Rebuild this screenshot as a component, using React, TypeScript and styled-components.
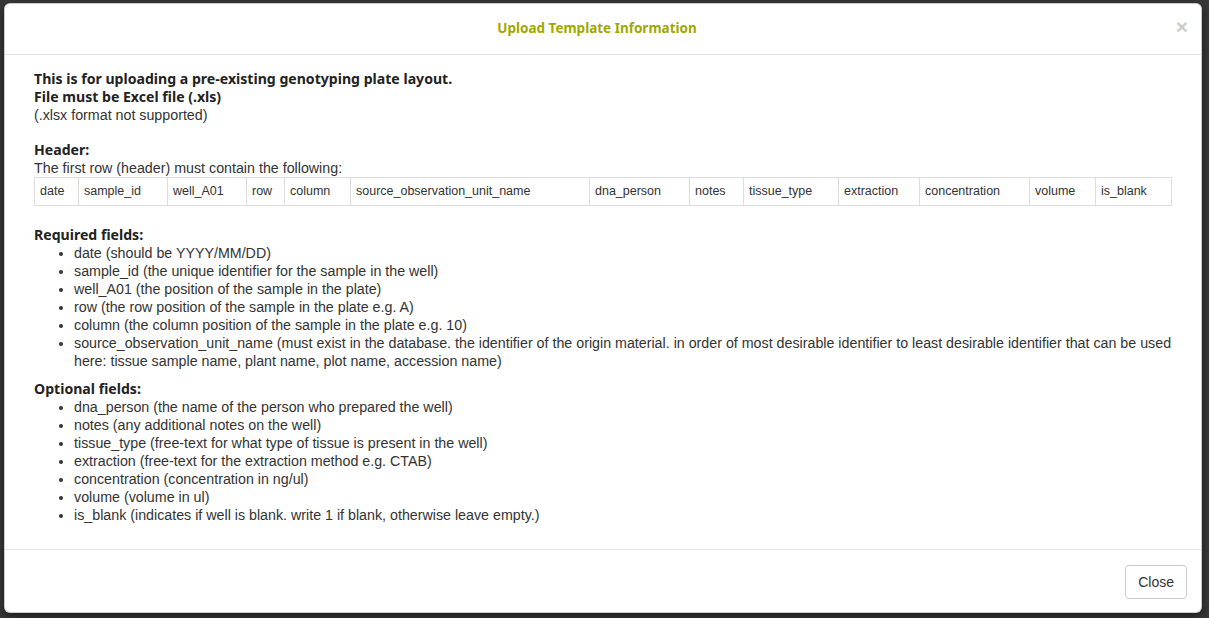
import styled, { createGlobalStyle } from "styled-components";

const GlobalStyle = createGlobalStyle`
  html, body {
    margin: 0;
    padding: 0;
    background: #373737;
    height: 100%;
    overflow: hidden;
  }
  #root {
    height: 100%;
  }
`;

const Backdrop = styled.div`
  height: 100vh;
  box-sizing: border-box;
  padding: 3px 7px 5px 4px;
  background: #373737;
`;

const Modal = styled.div`
  height: 100%;
  box-sizing: border-box;
  background: #fff;
  border: 1px solid rgba(0, 0, 0, 0.2);
  border-radius: 6px;
  box-shadow: 0 3px 9px rgba(0, 0, 0, 0.5);
  display: flex;
  flex-direction: column;
  font-family: "Liberation Sans", Arial, sans-serif;
  color: #333;
`;

const Header = styled.div`
  height: 50px;
  flex-shrink: 0;
  display: flex;
  align-items: center;
  justify-content: center;
  position: relative;
  border-bottom: 1px solid #e5e5e5;
`;

const Title = styled.h4`
  margin: -2px 12px 0 0;
  font-family: "Noto Sans", "DejaVu Sans", sans-serif;
  font-weight: 700;
  font-size: 13.5px;
  color: #a0a800;
`;

const CloseX = styled.button`
  position: absolute;
  right: 13px;
  top: 12px;
  border: 0;
  background: none;
  padding: 0;
  font-family: "Liberation Sans", Arial, sans-serif;
  font-size: 21px;
  font-weight: 700;
  line-height: 1;
  color: #000;
  opacity: 0.2;
  cursor: pointer;
`;

const Body = styled.div`
  flex: 1;
  padding: 15px 29px 0 29px;
  font-size: 14.25px;
  line-height: 18px;
`;

const Strong = styled.div`
  font-family: "Noto Sans", "DejaVu Sans", sans-serif;
  font-weight: 700;
  font-size: 14.1px;
  color: #222;
`;

const Line = styled.div<{ $gap?: number }>`
  margin-bottom: ${(p) => p.$gap ?? 0}px;
`;

const Heading = styled(Strong)<{ $top?: number }>`
  margin-top: ${(p) => p.$top ?? 0}px;
`;

const Table = styled.table`
  width: 100%;
  table-layout: fixed;
  border-collapse: collapse;
  margin: 0 0 20px;
`;

const Cell = styled.td`
  border: 1px solid #ddd;
  padding: 4px 5px 5px;
  font-size: 12.5px;
  line-height: 18px;
  white-space: nowrap;
  overflow: hidden;
  color: #333;
`;

const List = styled.ul`
  margin: 0;
  padding-left: 40px;
`;

const Footer = styled.div`
  flex-shrink: 0;
  display: flex;
  justify-content: flex-end;
  padding: 15px 14px 13px;
  border-top: 1px solid #e5e5e5;
`;

const Button = styled.button`
  height: 34px;
  padding: 0 12px;
  font-family: "Liberation Sans", Arial, sans-serif;
  font-size: 14px;
  color: #333;
  background: #fff;
  border: 1px solid #ccc;
  border-radius: 4px;
  cursor: pointer;
`;

const columns = [
  "date",
  "sample_id",
  "well_A01",
  "row",
  "column",
  "source_observation_unit_name",
  "dna_person",
  "notes",
  "tissue_type",
  "extraction",
  "concentration",
  "volume",
  "is_blank",
];

const widths = [44, 89, 79, 38, 66, 239, 100, 54, 95, 81, 110, 66, 76];

const required = [
  "date (should be YYYY/MM/DD)",
  "sample_id (the unique identifier for the sample in the well)",
  "well_A01 (the position of the sample in the plate)",
  "row (the row position of the sample in the plate e.g. A)",
  "column (the column position of the sample in the plate e.g. 10)",
  "source_observation_unit_name (must exist in the database. the identifier of the origin material. in order of most desirable identifier to least desirable identifier that can be used here: tissue sample name, plant name, plot name, accession name)",
];

const optional = [
  "dna_person (the name of the person who prepared the well)",
  "notes (any additional notes on the well)",
  "tissue_type (free-text for what type of tissue is present in the well)",
  "extraction (free-text for the extraction method e.g. CTAB)",
  "concentration (concentration in ng/ul)",
  "volume (volume in ul)",
  "is_blank (indicates if well is blank. write 1 if blank, otherwise leave empty.)",
];

export default function App() {
  return (
    <Backdrop>
      <GlobalStyle />
      <Modal>
        <Header>
          <Title>Upload Template Information</Title>
          <CloseX aria-label="Close">×</CloseX>
        </Header>
        <Body>
          <Strong>This is for uploading a pre-existing genotyping plate layout.</Strong>
          <Strong>File must be Excel file (.xls)</Strong>
          <Line $gap={17}>(.xlsx format not supported)</Line>
          <Heading>Header:</Heading>
          <Line>The first row (header) must contain the following:</Line>
          <Table>
            <colgroup>
              {widths.map((w, i) => (
                <col key={i} style={{ width: w }} />
              ))}
            </colgroup>
            <tbody>
              <tr>
                {columns.map((c) => (
                  <Cell key={c}>{c}</Cell>
                ))}
              </tr>
            </tbody>
          </Table>
          <Heading>Required fields:</Heading>
          <List>
            {required.map((r) => (
              <li key={r}>{r}</li>
            ))}
          </List>
          <Heading $top={10}>Optional fields:</Heading>
          <List>
            {optional.map((o) => (
              <li key={o}>{o}</li>
            ))}
          </List>
        </Body>
        <Footer>
          <Button>Close</Button>
        </Footer>
      </Modal>
    </Backdrop>
  );
}
